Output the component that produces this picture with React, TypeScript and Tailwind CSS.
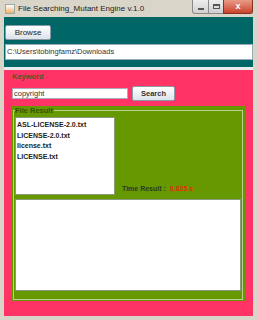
import React from 'react';

const files = ['ASL-LICENSE-2.0.txt', 'LICENSE-2.0.txt', 'license.txt', 'LICENSE.txt'];

function TitleBar() {
  return (
    <div className="flex h-[17px] items-center bg-[#d9d5c9] pl-[5px]">
      <div className="h-[10px] w-[10px] border border-[#9aa] bg-gradient-to-b from-[#fff] to-[#f0b060]" />
      <span className="ml-[3px] whitespace-nowrap text-[8px] text-[#222]">File Searching_Mutant Engine v.1.0</span>
      <div className="ml-auto flex h-[14px] self-start pr-[5px]">
        <div className="flex w-[17px] items-center justify-center rounded-bl-[3px] border border-t-0 border-[#8a8a8a] bg-gradient-to-b from-[#eee] to-[#cfcfcf]">
          <div className="mt-[4px] h-[2px] w-[6px] bg-[#555]" />
        </div>
        <div className="flex w-[14px] items-center justify-center border-b border-[#8a8a8a] bg-gradient-to-b from-[#eee] to-[#cfcfcf]">
          <div className="h-[5px] w-[7px] border border-t-2 border-[#555]" />
        </div>
        <div className="flex w-[30px] items-center justify-center rounded-br-[3px] border border-t-0 border-[#8a3020] bg-gradient-to-b from-[#e89a88] to-[#c8402a] text-[9px] font-bold leading-none text-white">
          x
        </div>
      </div>
    </div>
  );
}

export default function App() {
  return (
    <div className="h-[320px] w-[258px] overflow-hidden bg-[#d9d5c9] font-['Liberation_Sans',Arial,sans-serif]">
      <TitleBar />
      <div className="ml-[4px] mr-[5px] flex h-[299px] flex-col">
        <div className="flex flex-col bg-[#006666] pb-[7px] pt-[8px]">
          <button className="ml-[1px] flex h-[15px] w-[46px] items-center justify-center rounded-[2px] border border-[#8a9aa8] bg-gradient-to-b from-[#fff] to-[#dde3ea] text-[8px] text-[#222]">
            Browse
          </button>
          <div className="ml-[1px] mt-[4px] flex h-[16px] items-center border border-[#9ab] bg-white pl-[1px] text-[7.5px] text-[#333]">
            C:\Users\tobingfamz\Downloads
          </div>
        </div>
        <div className="h-[3px] bg-[#e8ecec]" />
        <div className="flex flex-1 flex-col bg-[#ff3366] px-[8px] pb-[15px]">
          <div className="mt-[2px] h-[9px] text-[7.5px] font-bold leading-[9px] text-[#552]">Keyword</div>
          <div className="mt-[5px] flex items-center">
            <div className="flex h-[11px] w-[116px] items-center border border-[#aab] bg-white pl-[1px] text-[7.5px] text-[#333]">
              copyright
            </div>
            <button className="ml-[4px] flex h-[15px] w-[43px] items-center justify-center rounded-[2px] border border-[#8a9aa8] bg-gradient-to-b from-[#fff] to-[#dde3ea] text-[7.5px] font-bold text-[#333]">
              Search
            </button>
          </div>
          <div className="mt-[5px] flex flex-1 flex-col bg-[#669900] p-[1px] pr-[2px]">
            <div className="relative mt-[3px] flex flex-1 flex-col border border-[#b8d090] px-[1px] pb-[8px] pt-[6px]">
              <span className="absolute -top-[5px] left-[1px] bg-[#669900] pr-[1px] text-[7.5px] font-bold leading-[9px] text-[#335500]">
                File Result
              </span>
              <div className="flex">
                <div className="h-[78px] w-[100px] border border-[#8a9a7a] bg-white pl-[1px] pt-[2px] text-[7px] font-bold leading-[10.5px] text-[#222]">
                  {files.map((f) => (
                    <div key={f}>{f}</div>
                  ))}
                </div>
                <div className="ml-[7px] flex items-end pb-[1px] text-[7px] font-bold">
                  <span className="text-[#2a3a2a]">Time Result :</span>
                  <span className="ml-[4px] text-[#e03000]">8,825 s</span>
                </div>
              </div>
              <div className="mt-[4px] flex-1 border border-[#8a9a7a] bg-white" />
            </div>
          </div>
        </div>
      </div>
    </div>
  );
}
